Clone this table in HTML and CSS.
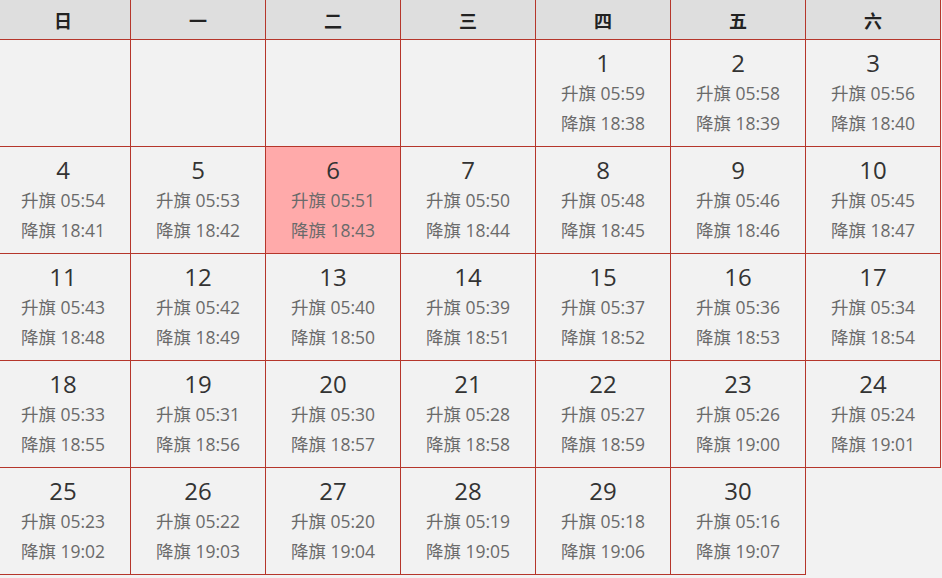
FILE: index.html
```html
<!DOCTYPE html>
<html lang="zh-CN">
<head>
<meta charset="utf-8">
<title>升旗降旗时间</title>
<link rel="stylesheet" href="styles.css">
</head>
<body>
<table class="cal">
<thead>
<tr><th>日</th><th>一</th><th>二</th><th>三</th><th>四</th><th>五</th><th>六</th></tr>
</thead>
<tbody>
<tr>
<td></td><td></td><td></td><td></td>
<td><div class="d">1</div><div class="t">升旗 05:59</div><div class="t">降旗 18:38</div></td>
<td><div class="d">2</div><div class="t">升旗 05:58</div><div class="t">降旗 18:39</div></td>
<td><div class="d">3</div><div class="t">升旗 05:56</div><div class="t">降旗 18:40</div></td>
</tr>
<tr>
<td><div class="d">4</div><div class="t">升旗 05:54</div><div class="t">降旗 18:41</div></td>
<td><div class="d">5</div><div class="t">升旗 05:53</div><div class="t">降旗 18:42</div></td>
<td class="today"><div class="d">6</div><div class="t">升旗 05:51</div><div class="t">降旗 18:43</div></td>
<td><div class="d">7</div><div class="t">升旗 05:50</div><div class="t">降旗 18:44</div></td>
<td><div class="d">8</div><div class="t">升旗 05:48</div><div class="t">降旗 18:45</div></td>
<td><div class="d">9</div><div class="t">升旗 05:46</div><div class="t">降旗 18:46</div></td>
<td><div class="d">10</div><div class="t">升旗 05:45</div><div class="t">降旗 18:47</div></td>
</tr>
<tr>
<td><div class="d">11</div><div class="t">升旗 05:43</div><div class="t">降旗 18:48</div></td>
<td><div class="d">12</div><div class="t">升旗 05:42</div><div class="t">降旗 18:49</div></td>
<td><div class="d">13</div><div class="t">升旗 05:40</div><div class="t">降旗 18:50</div></td>
<td><div class="d">14</div><div class="t">升旗 05:39</div><div class="t">降旗 18:51</div></td>
<td><div class="d">15</div><div class="t">升旗 05:37</div><div class="t">降旗 18:52</div></td>
<td><div class="d">16</div><div class="t">升旗 05:36</div><div class="t">降旗 18:53</div></td>
<td><div class="d">17</div><div class="t">升旗 05:34</div><div class="t">降旗 18:54</div></td>
</tr>
<tr>
<td><div class="d">18</div><div class="t">升旗 05:33</div><div class="t">降旗 18:55</div></td>
<td><div class="d">19</div><div class="t">升旗 05:31</div><div class="t">降旗 18:56</div></td>
<td><div class="d">20</div><div class="t">升旗 05:30</div><div class="t">降旗 18:57</div></td>
<td><div class="d">21</div><div class="t">升旗 05:28</div><div class="t">降旗 18:58</div></td>
<td><div class="d">22</div><div class="t">升旗 05:27</div><div class="t">降旗 18:59</div></td>
<td><div class="d">23</div><div class="t">升旗 05:26</div><div class="t">降旗 19:00</div></td>
<td><div class="d">24</div><div class="t">升旗 05:24</div><div class="t">降旗 19:01</div></td>
</tr>
<tr>
<td><div class="d">25</div><div class="t">升旗 05:23</div><div class="t">降旗 19:02</div></td>
<td><div class="d">26</div><div class="t">升旗 05:22</div><div class="t">降旗 19:03</div></td>
<td><div class="d">27</div><div class="t">升旗 05:20</div><div class="t">降旗 19:04</div></td>
<td><div class="d">28</div><div class="t">升旗 05:19</div><div class="t">降旗 19:05</div></td>
<td><div class="d">29</div><div class="t">升旗 05:18</div><div class="t">降旗 19:06</div></td>
<td><div class="d">30</div><div class="t">升旗 05:16</div><div class="t">降旗 19:07</div></td>
</tr>
</tbody>
</table>
</body>
</html>
```
FILE: styles.css
```css
html, body {
  margin: 0;
  padding: 0;
  background: #f2f2f2;
}
body {
  font-family: "Open Sans", "Noto Sans CJK SC", sans-serif;
  overflow: hidden;
}
.cal {
  border-collapse: collapse;
  table-layout: fixed;
  margin: -1px 0 0 -5px;
}
.cal th,
.cal td {
  border: 1px solid #b5362b;
  width: 134px;
  padding: 0;
  text-align: center;
}
.cal th {
  background: #dedede;
  height: 39px;
  font-weight: bold;
  font-size: 18px;
  color: #222;
  font-family: "Noto Sans CJK SC", sans-serif;
}
.cal td {
  height: 106px;
  vertical-align: top;
  background: #f2f2f2;
}
.cal td.today {
  background: #ffaaaa;
}
.d {
  font-size: 24px;
  line-height: 30px;
  color: #333;
  padding-top: 8px;
}
.t {
  font-size: 17.5px;
  line-height: 30px;
  color: #6a6a6a;
}
```
